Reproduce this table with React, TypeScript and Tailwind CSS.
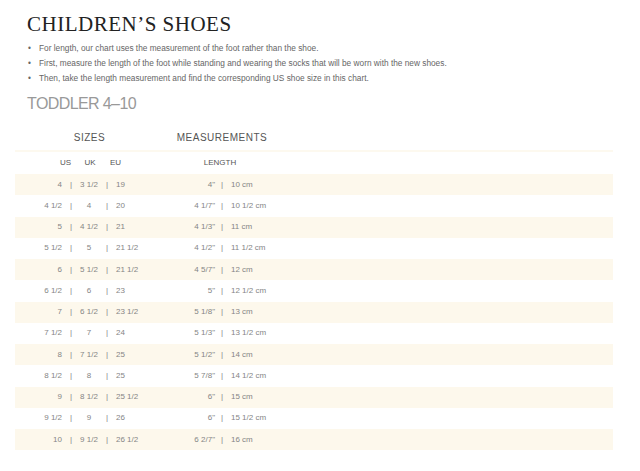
const rows = [
  ["4", "3 1/2", "19", '4"', "10 cm"],
  ["4 1/2", "4", "20", '4 1/7"', "10 1/2 cm"],
  ["5", "4 1/2", "21", '4 1/3"', "11 cm"],
  ["5 1/2", "5", "21 1/2", '4 1/2"', "11 1/2 cm"],
  ["6", "5 1/2", "21 1/2", '4 5/7"', "12 cm"],
  ["6 1/2", "6", "23", '5"', "12 1/2 cm"],
  ["7", "6 1/2", "23 1/2", '5 1/8"', "13 cm"],
  ["7 1/2", "7", "24", '5 1/3"', "13 1/2 cm"],
  ["8", "7 1/2", "25", '5 1/2"', "14 cm"],
  ["8 1/2", "8", "25", '5 7/8"', "14 1/2 cm"],
  ["9", "8 1/2", "25 1/2", '6"', "15 cm"],
  ["9 1/2", "9", "26", '6"', "15 1/2 cm"],
  ["10", "9 1/2", "26 1/2", '6 2/7"', "16 cm"],
];

const notes = [
  "For length, our chart uses the measurement of the foot rather than the shoe.",
  "First, measure the length of the foot while standing and wearing the socks that will be worn with the new shoes.",
  "Then, take the length measurement and find the corresponding US shoe size in this chart.",
];

export default function App() {
  return (
    <div className="h-[471px] w-[640px] overflow-hidden bg-white font-['Liberation_Sans',Arial,sans-serif]">
      <div className="pl-[27px] pt-[14px]">
        <h1 className="font-['Liberation_Serif',serif] text-[21px] leading-[21px] tracking-[0.5px] text-[#222]">
          CHILDREN’S SHOES
        </h1>
        <ul className="mt-[6px] text-[8.3px] leading-[15px] text-[#666]">
          {notes.map((note) => (
            <li key={note} className="flex">
              <span className="w-[12px] pl-[1px]">•</span>
              <span>{note}</span>
            </li>
          ))}
        </ul>
        <h2 className="mt-[8px] text-[16px] leading-[20px] tracking-[-0.6px] text-[#999]">
          TODDLER 4–10
        </h2>
      </div>

      <div className="ml-[15px] w-[598px]">
        <div className="mt-[17px] flex text-[10px] leading-[14px] tracking-[0.5px] text-[#555]">
          <div className="w-[149px] text-center">SIZES</div>
          <div className="w-[116px] text-center">MEASUREMENTS</div>
        </div>
        <div className="mt-[5px] flex h-[24px] items-center border-t-2 border-[#fdf9ef] text-[8px] text-[#555]">
          <div className="w-[56px] text-right">US</div>
          <div className="w-[38px] text-center">UK</div>
          <div className="w-[55px] pl-[1px]">EU</div>
          <div className="w-[112px] text-center">LENGTH</div>
        </div>
        {rows.map(([us, uk, eu, inch, cm], i) => (
          <div
            key={us}
            className={`flex h-[21.25px] items-center text-[8px] text-[#858585] ${
              i % 2 === 0 ? "bg-[#fdf8ec]" : "bg-white"
            }`}
          >
            <div className="w-[49px] pr-[2px] text-right">{us}</div>
            <div className="w-[14px] text-center">|</div>
            <div className="w-[22px] text-center">{uk}</div>
            <div className="w-[14px] text-center">|</div>
            <div className="w-[50px] pl-[2px]">{eu}</div>
            <div className="w-[51px] text-right">{inch}</div>
            <div className="w-[14px] text-center">|</div>
            <div className="pl-[2px]">{cm}</div>
          </div>
        ))}
      </div>
    </div>
  );
}
